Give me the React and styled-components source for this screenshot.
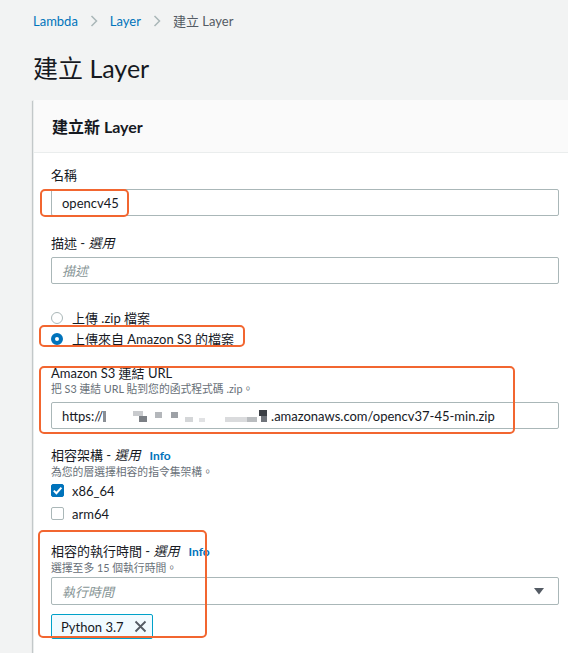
import React from 'react';
import styled, { createGlobalStyle } from 'styled-components';

const GlobalStyle = createGlobalStyle`
  html, body {
    margin: 0;
    padding: 0;
  }
  body {
    background: #f2f3f3;
    font-family: Lato, "Noto Sans CJK TC", sans-serif;
    color: #16191f;
    overflow: hidden;
  }
`;

const Chevron = () => (
  <svg width="8" height="12" viewBox="0 0 8 12">
    <polyline points="1.5,1 6.5,6 1.5,11" fill="none" stroke="#aab7b8" strokeWidth="1.5" />
  </svg>
);

const Check = () => (
  <svg width="11" height="11" viewBox="0 0 11 11">
    <polyline points="1.8,5.6 4.4,8.2 9.4,2.6" fill="none" stroke="#fff" strokeWidth="2" />
  </svg>
);

const Caret = () => (
  <svg width="10" height="7" viewBox="0 0 10 7">
    <polygon points="0,0 10,0 5,6.5" fill="#545b64" />
  </svg>
);

const Cross = () => (
  <svg width="13" height="13" viewBox="0 0 13 13">
    <path d="M1.5 1.5 L11.5 11.5 M11.5 1.5 L1.5 11.5" stroke="#545b64" strokeWidth="1.8" fill="none" />
  </svg>
);

// pixelated redaction inside the S3 URL
const Redaction = () => (
  <svg width="168" height="16" viewBox="0 0 168 16">
    <rect x="0" y="3" width="3" height="11" fill="#8a8f96" />
    <rect x="30" y="3" width="10" height="5" fill="#c9cbce" />
    <rect x="36" y="8" width="8" height="6" fill="#7b7f85" />
    <rect x="52" y="4" width="7" height="6" fill="#b4b7bb" />
    <rect x="68" y="4" width="7" height="6" fill="#9da1a6" />
    <rect x="82" y="9" width="8" height="5" fill="#d4d6d8" />
    <rect x="96" y="10" width="6" height="4" fill="#e1e2e4" />
    <rect x="122" y="9" width="22" height="5" fill="#dadbdd" />
    <rect x="144" y="9" width="10" height="5" fill="#b9bcbf" />
    <rect x="156" y="2" width="8" height="6" fill="#3b3f45" />
    <rect x="158" y="8" width="6" height="6" fill="#6f737a" />
  </svg>
);

const App = () => {
  return (
    <>
      <GlobalStyle />
      <Page>
        <Breadcrumbs>
          <Crumb>Lambda</Crumb>
          <Chevron />
          <Crumb>Layer</Crumb>
          <Chevron />
          <Crumb $current>建立 Layer</Crumb>
        </Breadcrumbs>
        <Title>建立 Layer</Title>

        <Card>
          <CardHeader>建立新 Layer</CardHeader>
          <CardBody>
            <Field $mt={13}>
              <Label>名稱</Label>
              <InputBox $h={27}>
                opencv45
                <Marker $top={-1} $left={-12} $w={89} $h={28} />
              </InputBox>
            </Field>

            <Field $mt={18}>
              <Label>描述 - <Em>選用</Em></Label>
              <InputBox $h={27}>
                <Placeholder>描述</Placeholder>
              </InputBox>
            </Field>

            <RadioGroup>
              <ChoiceRow>
                <RadioDot />
                上傳 .zip 檔案
              </ChoiceRow>
              <ChoiceRow>
                <RadioDot $on />
                上傳來自 Amazon S3 的檔案
                <Marker $top={-3} $left={-12} $w={206} $h={22} />
              </ChoiceRow>
            </RadioGroup>

            <Field $mt={15}>
              <Label>Amazon S3 連結 URL</Label>
              <Desc>把 S3 連結 URL 貼到您的函式程式碼 .zip。</Desc>
              <InputBox $h={27} $mt={6}>
                https://<Redaction />.amazonaws.com/opencv37-45-min.zip
              </InputBox>
              <Marker $top={2} $left={-12} $w={476} $h={68} />
            </Field>

            <Field $mt={17}>
              <Label>相容架構 - <Em>選用</Em><Info>Info</Info></Label>
              <Desc>為您的層選擇相容的指令集架構。</Desc>
              <CheckRow>
                <CheckBox $on><Check /></CheckBox>
                x86_64
              </CheckRow>
              <CheckRow>
                <CheckBox />
                arm64
              </CheckRow>
            </Field>

            <Field $mt={17}>
              <Label>相容的執行時間 - <Em>選用</Em><Info>Info</Info></Label>
              <Desc>選擇至多 15 個執行時間。</Desc>
              <Select>
                <Placeholder>執行時間</Placeholder>
                <Caret />
              </Select>
              <Tokens>
                <Token>
                  Python 3.7
                  <Cross />
                </Token>
              </Tokens>
              <Marker $top={-12} $left={-13} $w={169} $h={108} />
            </Field>
          </CardBody>
        </Card>
      </Page>
    </>
  );
};

export default App;

const Page = styled.div`
  width: 568px;
  height: 653px;
  box-sizing: border-box;
  padding: 12px 0 0 33px;
  overflow: hidden;
`;

const Breadcrumbs = styled.div`
  display: flex;
  align-items: center;
  gap: 12px;
  font-size: 13px;
  line-height: 18px;
`;

const Crumb = styled.span`
  color: ${(p) => (p.$current ? '#545b64' : '#0073bb')};
`;

const Title = styled.h1`
  margin: 22px 0 0;
  font-size: 25px;
  line-height: 32px;
  font-weight: 400;
  color: #16191f;
`;

const Card = styled.div`
  margin-top: 16px;
  width: 570px;
  background: #fff;
  border-left: 1px solid #eaeded;
  box-shadow: 0 1px 1px 0 rgba(0, 28, 36, 0.3), -1px 1px 1px 0 rgba(0, 28, 36, 0.15);
`;

const CardHeader = styled.div`
  height: 52px;
  display: flex;
  align-items: center;
  padding: 0 18px;
  background: #fafafa;
  border-bottom: 1px solid #eaeded;
  font-size: 16px;
  font-weight: 700;
  color: #16191f;
`;

const CardBody = styled.div`
  padding: 0 0 20px 17px;
`;

const Field = styled.div`
  position: relative;
  display: flex;
  flex-direction: column;
  align-items: flex-start;
  margin-top: ${(p) => p.$mt || 0}px;
`;

const Label = styled.div`
  display: flex;
  align-items: baseline;
  font-size: 13px;
  line-height: 18px;
  color: #16191f;
  white-space: pre;
`;

const Em = styled.i`
  font-style: italic;
`;

const Info = styled.span`
  margin-left: 9px;
  font-size: 12px;
  font-weight: 700;
  color: #0073bb;
`;

const Desc = styled.div`
  font-size: 10.8px;
  line-height: 14px;
  color: #687078;
`;

const InputBox = styled.div`
  position: relative;
  width: 508px;
  height: ${(p) => p.$h}px;
  margin-top: ${(p) => p.$mt || 5}px;
  box-sizing: border-box;
  padding: 0 10px;
  display: flex;
  align-items: center;
  border: 1px solid #aab7b8;
  border-radius: 2px;
  background: #fff;
  font-size: 13px;
  color: #16191f;
  white-space: pre;
`;

const Placeholder = styled.span`
  font-style: italic;
  color: #879596;
  font-size: 13px;
`;

const RadioGroup = styled.div`
  margin-top: 23px;
  display: flex;
  flex-direction: column;
`;

const ChoiceRow = styled.div`
  position: relative;
  display: flex;
  align-items: center;
  gap: 9px;
  height: 21px;
  font-size: 13px;
  color: #16191f;
`;

const RadioDot = styled.span`
  width: 12px;
  height: 12px;
  box-sizing: border-box;
  border-radius: 50%;
  background: #fff;
  border: ${(p) => (p.$on ? '4px solid #0073bb' : '1px solid #aab7b8')};
  flex-shrink: 0;
`;

const CheckRow = styled.div`
  display: flex;
  align-items: center;
  gap: 8px;
  height: 23px;
  font-size: 13px;
  color: #16191f;
`;

const CheckBox = styled.span`
  width: 13px;
  height: 13px;
  box-sizing: border-box;
  border-radius: 2px;
  display: flex;
  align-items: center;
  justify-content: center;
  background: ${(p) => (p.$on ? '#0073bb' : '#fff')};
  border: 1px solid ${(p) => (p.$on ? '#0073bb' : '#aab7b8')};
`;

const Select = styled.div`
  width: 508px;
  height: 28px;
  margin-top: 2px;
  box-sizing: border-box;
  padding: 0 14px 0 10px;
  display: flex;
  align-items: center;
  justify-content: space-between;
  border: 1px solid #aab7b8;
  border-radius: 2px;
`;

const Tokens = styled.div`
  display: flex;
  margin-top: 9px;
`;

const Token = styled.div`
  height: 25px;
  box-sizing: border-box;
  display: flex;
  align-items: center;
  gap: 10px;
  padding: 0 5px 0 9px;
  background: #f1faff;
  border: 1px solid #00a1c9;
  border-radius: 2px;
  font-size: 13px;
  color: #16191f;
`;

const Marker = styled.span`
  position: absolute;
  top: ${(p) => p.$top}px;
  left: ${(p) => p.$left}px;
  width: ${(p) => p.$w}px;
  height: ${(p) => p.$h}px;
  box-sizing: border-box;
  border: 2px solid #f26630;
  border-radius: 5px;
  pointer-events: none;
`;
